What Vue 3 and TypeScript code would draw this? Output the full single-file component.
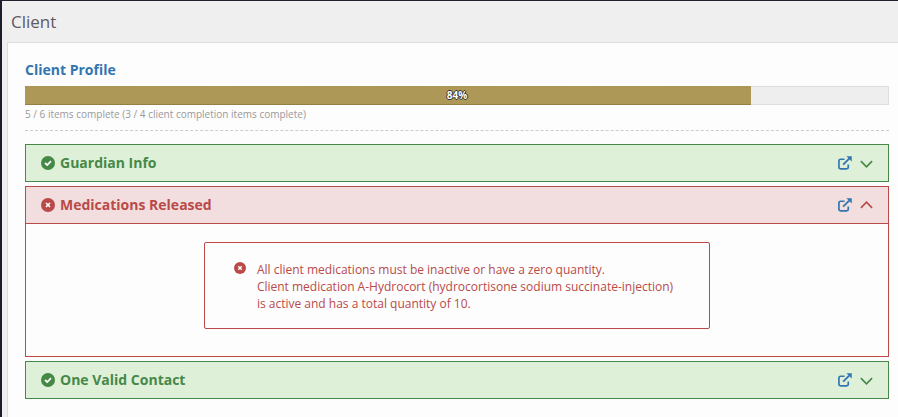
<script setup lang="ts">
import { computed, ref } from 'vue'

interface ProfileItem {
  id: string
  title: string
  complete: boolean
  messages: string[]
}

const items: ProfileItem[] = [
  { id: 'guardian', title: 'Guardian Info', complete: true, messages: [] },
  {
    id: 'medications',
    title: 'Medications Released',
    complete: false,
    messages: [
      'All client medications must be inactive or have a zero quantity.',
      'Client medication A-Hydrocort (hydrocortisone sodium succinate-injection)',
      'is active and has a total quantity of 10.',
    ],
  },
  { id: 'contact', title: 'One Valid Contact', complete: true, messages: [] },
]

const percent = ref(84)
const openId = ref<string | null>('medications')
const barStyle = computed(() => ({ width: `${percent.value}%` }))

function toggle(id: string): void {
  openId.value = openId.value === id ? null : id
}
</script>

<template>
  <div class="page">
    <h1 class="page-title">Client</h1>
    <main class="panel">
      <header class="summary">
        <h2 class="profile-title">Client Profile</h2>
        <div class="progress" role="progressbar" aria-label="Client Profile" :aria-valuenow="percent" aria-valuemin="0" aria-valuemax="100">
          <div class="bar" :style="barStyle">
            <svg class="ticks" aria-hidden="true">
              <defs>
                <pattern id="bar-ticks" width="9" height="9" patternUnits="userSpaceOnUse">
                  <path d="M0 2.5 2.5 0" stroke="#a48e4d" stroke-width="0.8" />
                </pattern>
              </defs>
              <rect width="100%" height="100%" fill="url(#bar-ticks)" />
            </svg>
          </div>
          <span class="percent">{{ percent }}%</span>
        </div>
        <p class="caption">5 / 6 items complete (3 / 4 client completion items complete)</p>
      </header>

      <section v-for="item in items" :key="item.id" class="item" :class="item.complete ? 'success' : 'danger'">
        <div class="item-head">
          <svg class="status" viewBox="0 0 14 14" aria-hidden="true">
            <circle cx="7" cy="7" r="7" fill="currentColor" />
            <path v-if="item.complete" class="mark" d="M4 7 6.2 9 10 5.2" />
            <path v-else class="mark" d="M5 5 9 9M9 5 5 9" />
          </svg>
          <h3 class="item-title">{{ item.title }}</h3>
          <a class="open-link" href="#" :aria-label="`Open ${item.title}`">
            <svg viewBox="0 0 15 15" aria-hidden="true">
              <path class="line" d="M7 3.5H2.8Q1 3.5 1 5.3V11.9Q1 13.7 2.8 13.7H9.2Q11 13.7 11 11.9V9" />
              <path class="line arrow" d="M5.5 9.3 12 2.8" />
              <path d="M9 0.3H14.7V6Z" fill="currentColor" />
            </svg>
          </a>
          <button class="toggle" type="button" :aria-label="`Toggle ${item.title}`" :aria-expanded="openId === item.id" @click="toggle(item.id)">
            <svg viewBox="0 0 14 14" aria-hidden="true">
              <path v-if="openId === item.id" class="line" d="M1 9.5 7 3.5 13 9.5" />
              <path v-else class="line" d="M1 4.5 7 10.5 13 4.5" />
            </svg>
          </button>
        </div>
        <div v-if="openId === item.id && item.messages.length" class="item-body">
          <div class="alert">
            <svg class="alert-icon" viewBox="0 0 14 14" aria-hidden="true">
              <circle cx="7" cy="7" r="7" fill="currentColor" />
              <path class="mark" d="M5 5 9 9M9 5 5 9" />
            </svg>
            <p class="alert-text">
              <span v-for="line in item.messages" :key="line">{{ line }}</span>
            </p>
          </div>
        </div>
      </section>
    </main>
  </div>
</template>

<style>
body {
  background: #efefef;
}
</style>

<style scoped>
.page {
  box-sizing: border-box;
  min-height: 100vh;
  display: flex;
  flex-direction: column;
  border-top: 1px solid #20222b;
  border-left: 2px solid #1c1f27;
  padding-left: 5px;
  background: #efefef;
  font-family: "Open Sans", "Noto Sans", sans-serif;
}

h1,
h2,
h3,
p {
  margin: 0;
}

.page-title {
  padding: 9px 4px 8px;
  font-size: 17px;
  line-height: 24px;
  font-weight: 400;
  color: #5e5a61;
}

.panel {
  flex: 1;
  display: flex;
  flex-direction: column;
  gap: 4px;
  padding: 16px 9px 17px 17px;
  border: 1px solid #dddddd;
  border-width: 1px 0 0 1px;
  background: #fdfdfd;
}

.summary {
  margin-bottom: 9px;
  padding-bottom: 8px;
  border-bottom: 1px dashed #cccccc;
}

.profile-title {
  padding-bottom: 6px;
  font-size: 14px;
  line-height: 21px;
  font-weight: 700;
  color: #3276b1;
}

.progress {
  position: relative;
  height: 19px;
  background: #eeeeee;
  box-shadow: inset 0 0 0 1px #dddddd;
}

.bar {
  box-sizing: border-box;
  height: 100%;
  border-bottom: 1px solid #967f42;
  background: #ae9858;
}

.ticks {
  display: block;
  width: 100%;
  height: 100%;
}

.percent {
  position: absolute;
  inset: 0;
  text-align: center;
  font-size: 10px;
  line-height: 19px;
  font-weight: 700;
  color: #ffffff;
  text-shadow: 1px 0 #333333, -1px 0 #333333, 0 1px #333333, 0 -1px #333333;
}

.caption {
  padding-top: 2px;
  font-size: 10px;
  line-height: 15px;
  color: #999999;
}

.item {
  border: 1px solid currentColor;
}

.success {
  color: #468847;
}

.danger {
  color: #b94a48;
}

.item-head {
  display: flex;
  align-items: center;
  height: 36px;
  padding: 0 15px;
}

.success .item-head {
  background: #dff0d8;
}

.danger .item-head {
  background: #f2dede;
}

.status {
  width: 14px;
  height: 14px;
  margin-right: 5px;
}

.mark {
  fill: none;
  stroke: #ffffff;
  stroke-width: 1.7;
}

.item-title {
  flex: 1;
  font-size: 14px;
  line-height: 20px;
  font-weight: 700;
}

.open-link {
  display: flex;
  margin-right: 8px;
  color: #3276b1;
}

.open-link svg {
  width: 14px;
  height: 14px;
}

.toggle {
  display: flex;
  padding: 0;
  border: 0;
  background: none;
  color: inherit;
  cursor: pointer;
}

.toggle svg {
  width: 13px;
  height: 13px;
}

.line {
  fill: none;
  stroke: currentColor;
  stroke-width: 1.8;
}

.arrow {
  stroke-width: 2;
}

.item-body {
  padding: 18px 20px 27px;
  border-top: 1px solid currentColor;
}

.alert {
  box-sizing: border-box;
  display: flex;
  align-items: flex-start;
  width: fit-content;
  margin: 0 auto;
  padding: 18px 36px 16px 29px;
  border: 1px solid currentColor;
  border-radius: 2px;
}

.alert-icon {
  flex: none;
  width: 12px;
  height: 12px;
  margin: 1px 11px 0 0;
}

.alert-text {
  font-size: 12px;
  line-height: 17px;
}

.alert-text span {
  display: block;
}
</style>
